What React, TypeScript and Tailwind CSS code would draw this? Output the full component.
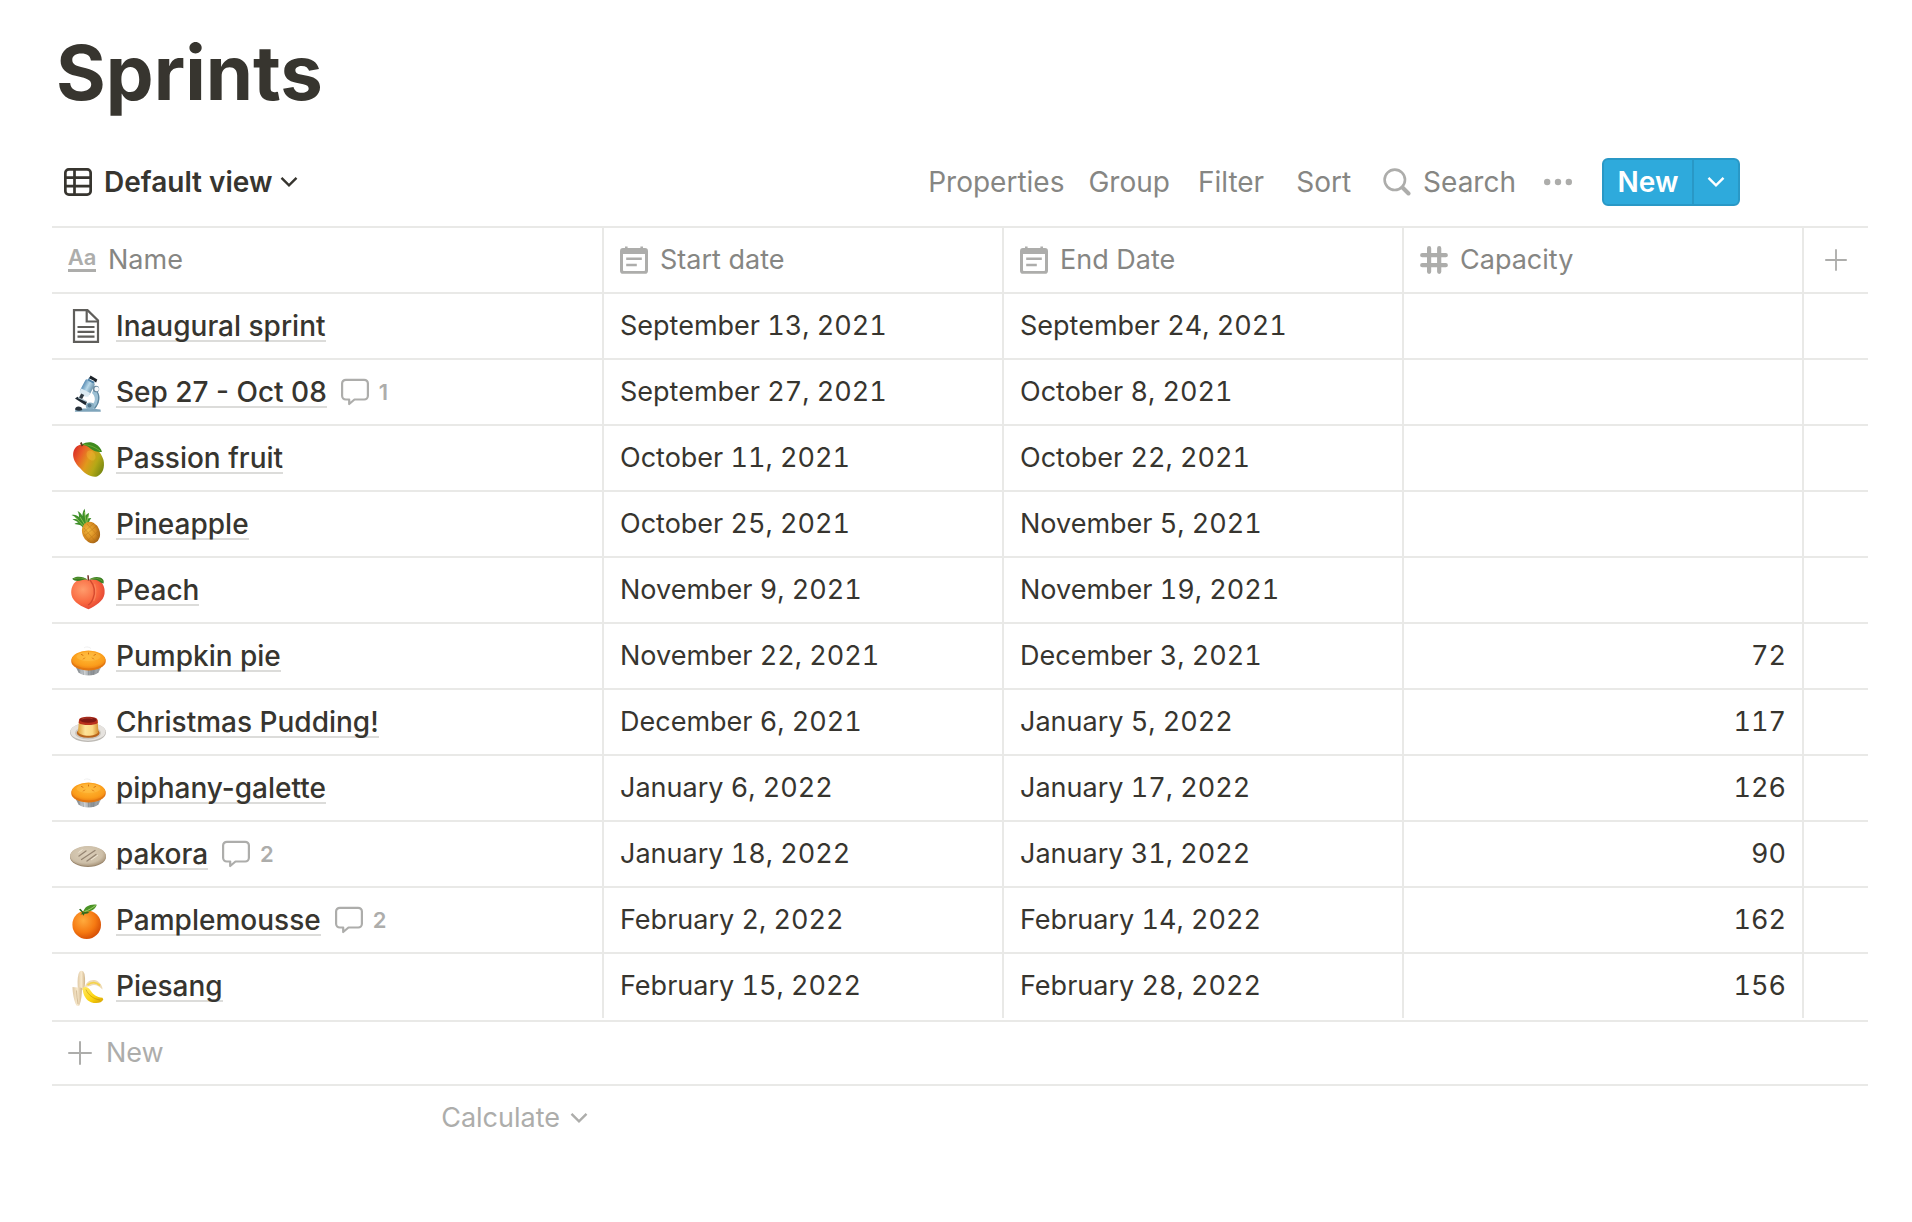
import { useId, type ReactNode } from "react";

type IconProps = { className?: string };

function ChevronDown({ className }: IconProps) {
  return (
    <svg viewBox="0 0 18 12" className={className} fill="none" stroke="currentColor" strokeWidth="2.4" aria-hidden="true">
      <path d="M1.5 1.8 9 9.4l7.500-7.600" />
    </svg>
  );
}

function TableIcon() {
  return (
    <svg viewBox="0 0 28 28" className="size-7 shrink-0" fill="none" stroke="currentColor" strokeWidth="2.700" aria-hidden="true">
      <rect x="1.350" y="1.350" width="25.300" height="25.300" rx="3.500" />
      <path d="M1.500 9.700h25M1.500 18.200h25M10.500 1.500v25" />
    </svg>
  );
}

function DateIcon() {
  return (
    <svg viewBox="0 0 28 28" className="size-7 shrink-0" fill="currentColor" aria-hidden="true">
      <path
        fillRule="evenodd"
        d="M5 .5h2.600v1.600h12.800V.5H23v1.600h1.800A3.100 3.100 0 0 1 28 5.200v19.500a3.100 3.100 0 0 1-3.200 3.100H3.200A3.100 3.100 0 0 1 0 24.700V5.200a3.100 3.100 0 0 1 3.200-3.100H5zM3 8v16.200c0 .5.3.8.8.8h20.400c.5 0 .8-.3.800-.8V8z"
      />
      <path d="M6.200 11.500h15.600V14H6.200zM6.200 17.700h10.600v2.500H6.200z" />
    </svg>
  );
}

function HashIcon() {
  return (
    <svg viewBox="0 0 28 28" className="size-7 shrink-0" fill="none" stroke="currentColor" strokeWidth="4.200" strokeLinecap="round" aria-hidden="true">
      <path d="M2.200 9.200h23.600M2.200 19.200h23.600M9.100 2.200v23.600M19.200 2.200v23.600" />
    </svg>
  );
}

function TitleIcon() {
  return (
    <span className="flex h-6 w-7 shrink-0 flex-col items-center justify-end border-b-3 border-current text-[22px] leading-6 font-semibold" aria-hidden="true">
      Aa
    </span>
  );
}

function SearchIcon() {
  return (
    <svg viewBox="0 0 28 28" className="size-7 shrink-0" fill="none" stroke="currentColor" aria-hidden="true">
      <circle cx="11.800" cy="11.800" r="10.200" strokeWidth="2.600" />
      <path d="m19.500 19.500 6 6" strokeWidth="4" strokeLinecap="round" />
    </svg>
  );
}

function PlusIcon({ className }: IconProps) {
  return (
    <svg viewBox="0 0 24 24" className={className} fill="none" stroke="currentColor" strokeWidth="2" strokeLinecap="round" aria-hidden="true">
      <path d="M12 1v22M1 12h22" />
    </svg>
  );
}

function CommentIcon() {
  return (
    <svg viewBox="0 0 28 28" className="size-7 shrink-0" fill="none" stroke="currentColor" strokeWidth="2.200" strokeLinejoin="round" aria-hidden="true">
      <path d="M4.800 1.800h18.400a3.700 3.700 0 0 1 3.700 3.700v12.300a3.700 3.700 0 0 1-3.700 3.700H13.500L8.200 26V21.500H4.800a3.700 3.700 0 0 1-3.700-3.700V5.500a3.700 3.700 0 0 1 3.700-3.700z" />
    </svg>
  );
}

function Glyph({ children }: { children: ReactNode }) {
  return (
    <svg viewBox="0 0 36 40" className="h-10 w-9 shrink-0" aria-hidden="true">
      {children}
    </svg>
  );
}

function PageGlyph() {
  return (
    <Glyph>
      <g fill="none" stroke="#5f5e5b" strokeWidth="2.200">
        <path d="M4 4.100h13.500L28 14.500v21.400H4z" />
        <path d="M16.700 4.500v11h11" />
        <path d="M7.500 21h17M7.500 25.800h17M7.500 30.600h17" />
      </g>
    </Glyph>
  );
}

function MicroscopeGlyph() {
  const id = useId();
  return (
    <Glyph>
      <defs>
        <linearGradient id={id} x1="0" x2="1">
          <stop offset="0" stopColor="#5d8fb5" />
          <stop offset="0.500" stopColor="#b9d9ea" />
          <stop offset="1" stopColor="#6e95ad" />
        </linearGradient>
      </defs>
      <path d="M5.500 37.500c5-1.500 19-1.500 25 0l.3 2.200H4.800z" fill="#7fa5bb" />
      <path d="M24 16.500c7 4 7.500 14 .5 20.500h-8l1-2.500c7-1 10-8 4.500-13.500z" fill="#9cc0d4" />
      <path d="M26.500 18.500c3.500 5 3 12.500-2 18" fill="none" stroke="#5f879f" strokeWidth="1.200" />
      <ellipse cx="20" cy="34" rx="4.200" ry="3.400" fill="#8aafc3" />
      <circle cx="19.500" cy="33.500" r="2" fill="#4d7289" />
      <path d="m5 26.500 2.500-1.800 9.500 5-1.500 3.500z" fill="#1f2932" />
      <path d="m8 25.500 8.500 4" stroke="#b4cbd7" strokeWidth="1.200" />
      <path d="M5 37.500c.5-3.500 4-3.500 6.500-2l.8 2.500c-2.500 1.200-5 1-7.300-.5z" fill="#27313a" />
      <g transform="rotate(28 18 16)">
        <rect x="12" y="8.500" width="10.500" height="14" rx="2.500" fill={`url(#${id})`} />
        <rect x="14" y="5.500" width="7" height="4" rx="1" fill="#4e82a8" />
        <path d="M12.300 19.500h10v4c-2 2-8 2-10 0z" fill="#dbeaf2" />
        <rect x="14.500" y="24" width="3.500" height="4.500" fill="#303b44" />
      </g>
      <path d="m20.500 3.500 6.800 4-1.200 3-7-4z" fill="#1d232a" />
      <path d="m19.500 7 5 2.500" stroke="#d0dde5" />
      <circle cx="26" cy="17" r="3.200" fill="#6c8ca0" />
      <circle cx="26.700" cy="17" r="2.300" fill="#f3f7fa" />
    </Glyph>
  );
}

function MangoGlyph() {
  const id = useId();
  return (
    <Glyph>
      <defs>
        <linearGradient id={id} x1="0" y1="0.200" x2="1" y2="0.700">
          <stop offset="0" stopColor="#d92f25" />
          <stop offset="0.250" stopColor="#ea5f28" />
          <stop offset="0.500" stopColor="#e0991c" />
          <stop offset="0.750" stopColor="#b5a816" />
          <stop offset="1" stopColor="#7b8a12" />
        </linearGradient>
      </defs>
      <path d="M3.200 15C4.500 8 10 5.500 16 6.500c8 .5 15 7 17.500 15.500 1.500 7-.5 14-6.500 16.500-6 1.200-12.500-3-17-8.500C5.500 26 2.500 20 3.200 15z" fill={`url(#${id})`} />
      <ellipse cx="21" cy="17.500" rx="4" ry="5.500" fill="#ffd84a" opacity="0.250" transform="rotate(-35 21 17.500)" />
      <path d="M10.800 4.500 12.500 8" stroke="#5a3a1c" strokeWidth="1.800" />
      <path d="M12 6.500c4-3 10-3 13.500-.5 3.500 2 5.500 4.500 6.500 7.800-3 .6-8-.3-11-2.800-3-2.800-5.500-3.500-9-4.500z" fill="#3f8a1e" />
      <path d="M14 6.600c5 .2 11 2.500 16 6.200" fill="none" stroke="#6fae34" strokeWidth="0.900" />
    </Glyph>
  );
}

function PineappleGlyph() {
  const id = useId();
  return (
    <Glyph>
      <defs>
        <radialGradient id={id} cx="0.400" cy="0.350" r="0.750">
          <stop offset="0" stopColor="#f3b93f" />
          <stop offset="0.550" stopColor="#d88c22" />
          <stop offset="1" stopColor="#94560f" />
        </radialGradient>
      </defs>
      <path d="M13 24c-1-3-5-3.500-8.500-4 1.200-1 3-1.500 4-1.500C6.500 17 4 16 2.500 15.500c2-.8 4-.5 5.500 0C6 13.500 3.500 11.500 1.500 11c3-1 6 .5 7.500 2C9 10.500 8.500 8.500 7.500 7c2.500 1 4 3 4.800 5C12.500 9.500 13 7 14.500 4.800c.8 2.500.8 5 .5 7.200 1.200-1.500 2.500-2.500 4-3-.2 2.500-1 4-1.500 5.500 1-.5 2.500-.7 3.800-.5-1 1.500-2 3-2.800 5z" fill="#3f8f2b" />
      <path d="m10 13 5 8M14.500 8l1.800 11M5 13l8.500 9M18.500 11l-2 8.500" stroke="#8cc451" strokeWidth="0.900" />
      <ellipse cx="21" cy="28.500" rx="8.700" ry="11" transform="rotate(-22 21 28.500)" fill={`url(#${id})`} />
      <g stroke="#a5640f" strokeWidth="0.800" opacity="0.400">
        <path d="m14 24 12 14M17 20l12 13M13.500 29.500l6.500 8M27 21.500 14.500 32M29 26.500 17.500 36.500M24 19l-10 9" />
      </g>
    </Glyph>
  );
}

function PeachGlyph() {
  const id = useId();
  return (
    <Glyph>
      <defs>
        <radialGradient id={id} cx="0.350" cy="0.350" r="0.750">
          <stop offset="0" stopColor="#ff9c6c" />
          <stop offset="0.600" stopColor="#f9673f" />
          <stop offset="1" stopColor="#de3f32" />
        </radialGradient>
      </defs>
      <path d="M18.500 10c-3-1.500-8-1.500-12 1-4 3-6 8-5 14 1.500 7.500 11 12 17 14.200C25.500 36 33.500 31 34.500 24c.8-5.500-1-10.500-5-13-3-2-8-2.500-11-1z" fill={`url(#${id})`} />
      <path d="M20 10c4 5 5.500 12 3 18.500-1.200 3.500-3 5.500-5 6.500" fill="none" stroke="#d4492f" strokeWidth="1.300" />
      <path d="M24.500 14c2 5.500 1.500 12-.8 17" fill="none" stroke="#ff9a70" strokeWidth="1.200" opacity="0.500" />
      <path d="M18.500 10.500 18 5.200" stroke="#6e2f25" strokeWidth="1.500" />
      <path d="M17.500 9.500C14 6.300 6 5.500 2.200 8.700c2 2.500 6 2.800 9.300 1.500 2-.6 4-.7 6-.7z" fill="#397e22" />
      <path d="M19 9.500C23 6.500 30 6 33 9.500c1 1.500.8 3 .5 4-3-.5-4-2.500-7-3.500-2.500-.7-5-.7-7.500-.5z" fill="#397e22" />
      <path d="M4 8.600c4-1 9-.5 12.500.8M21 9c4-1.500 8-.8 11.500 2.200" fill="none" stroke="#6ea53a" strokeWidth="0.800" />
    </Glyph>
  );
}

function PieGlyph() {
  const id = useId();
  return (
    <Glyph>
      <defs>
        <linearGradient id={`${id}t`} x2="1">
          <stop offset="0" stopColor="#71777c" />
          <stop offset="0.350" stopColor="#cfd3d6" />
          <stop offset="0.600" stopColor="#8b9094" />
          <stop offset="1" stopColor="#b4b8bb" />
        </linearGradient>
        <radialGradient id={`${id}c`} cx="0.500" cy="0.400" r="0.600">
          <stop offset="0" stopColor="#ffb935" />
          <stop offset="0.750" stopColor="#fb9e1c" />
          <stop offset="1" stopColor="#ef8514" />
        </radialGradient>
      </defs>
      <path d="M14 12c1-1.500 5-1.500 7 .5" fill="none" stroke="#dcdcdc" strokeWidth="1" opacity="0.400" />
      <path d="M4.500 28.500h28l-4 8c-4 4-16 4-20 0z" fill={`url(#${id}t)`} />
      <path d="M8.500 32.500l1 4.500M13 34l.5 5M18.500 34v5M24 34l-.5 5M28.500 32.500l-1 4.500" stroke="#62686c" strokeWidth="0.600" opacity="0.500" />
      <ellipse cx="18.500" cy="25" rx="17.300" ry="9.500" fill="#e27710" />
      <ellipse cx="18.500" cy="23.500" rx="16.800" ry="9" fill={`url(#${id}c)`} />
      <ellipse cx="18.500" cy="20.500" rx="12" ry="4.500" fill="#ffc14a" opacity="0.500" />
      <path d="m11.500 18.500 1.500.8M18.500 17v1M25.500 18.500l-1.500.8M13.500 23l1-1M23.500 23l-1-1" stroke="#cf6b0b" strokeWidth="0.900" strokeLinecap="round" />
    </Glyph>
  );
}

function PuddingGlyph() {
  const id = useId();
  return (
    <Glyph>
      <defs>
        <linearGradient id={id} x2="1">
          <stop offset="0" stopColor="#dfa13a" />
          <stop offset="0.350" stopColor="#fde39a" />
          <stop offset="0.700" stopColor="#fbd884" />
          <stop offset="1" stopColor="#d68f30" />
        </linearGradient>
      </defs>
      <ellipse cx="18" cy="30.500" rx="18" ry="9.400" fill="#bdbab5" />
      <ellipse cx="18" cy="29.800" rx="17.500" ry="8.900" fill="#e6e3df" />
      <ellipse cx="18" cy="31" rx="13" ry="6.500" fill="#cbc7c1" />
      <ellipse cx="18.200" cy="31" rx="11.500" ry="4.800" fill="#b8641b" />
      <path d="M9 18h18.500l1 12c-3 5-17.500 5-20.500 0z" fill={`url(#${id})`} />
      <path d="M9 18c0-4.200 18.500-4.200 18.500 0l.3 3c-3.500 2.800-15.600 2.800-19.100 0z" fill="#b9301c" />
      <ellipse cx="18.200" cy="18" rx="8.300" ry="2.700" fill="#801813" />
      <path d="M11.500 17.200c3-1.500 8-1.700 11-.5" fill="none" stroke="#b8402c" strokeWidth="0.800" />
    </Glyph>
  );
}

function FlatbreadGlyph() {
  const id = useId();
  return (
    <Glyph>
      <defs>
        <radialGradient id={id} cx="0.450" cy="0.400" r="0.600">
          <stop offset="0" stopColor="#ddd0bb" />
          <stop offset="0.750" stopColor="#cdbfa8" />
          <stop offset="1" stopColor="#ad9a80" />
        </radialGradient>
      </defs>
      <ellipse cx="18" cy="22.700" rx="18" ry="10.300" fill="#9a876e" />
      <ellipse cx="18" cy="22" rx="17.900" ry="10" fill={`url(#${id})`} />
      <g stroke="#857462" strokeWidth="1.300" strokeLinecap="round" opacity="0.800">
        <path d="m9 22 7-5M11.500 25.500 25 16.500M17 27l9-6.500" />
      </g>
      <path d="m8.500 18.500 4-3M21 26l7-5" stroke="#eee4d3" strokeWidth="1" />
    </Glyph>
  );
}

function OrangeGlyph() {
  const id = useId();
  return (
    <Glyph>
      <defs>
        <radialGradient id={id} cx="0.380" cy="0.350" r="0.700">
          <stop offset="0" stopColor="#ffab3d" />
          <stop offset="0.600" stopColor="#f67a12" />
          <stop offset="1" stopColor="#d44c05" />
        </radialGradient>
      </defs>
      <circle cx="16.700" cy="24.700" r="14.300" fill={`url(#${id})`} />
      <path d="M10 14.500c1.200-.4 2-.8 2-2L9 9.500l1.500-.8 3 3.500c2-1 4-.5 6 .5-2 .8-3.500 1.200-5 1l-.8 2-1.200-1.500z" fill="#316b1d" />
      <path d="M13.500 12C14 7 20 3.800 26.800 4.800c-1.500 4.500-6.300 7.700-13.300 7.200z" fill="#4a9326" />
      <path d="M14.500 11.500c4-1 7.500-3.500 11-6" fill="none" stroke="#a2cf6b" strokeWidth="1" />
    </Glyph>
  );
}

function BananaGlyph() {
  const id = useId();
  return (
    <Glyph>
      <defs>
        <linearGradient id={`${id}f`} x2="1">
          <stop offset="0" stopColor="#dfc9a6" />
          <stop offset="0.500" stopColor="#f8e9cc" />
          <stop offset="1" stopColor="#cfb389" />
        </linearGradient>
        <linearGradient id={`${id}y`} y2="1">
          <stop offset="0" stopColor="#ffe766" />
          <stop offset="0.600" stopColor="#fcd40c" />
          <stop offset="1" stopColor="#d29e06" />
        </linearGradient>
      </defs>
      <path d="M8 24c-.5-6-.8-11 .5-16C9.500 3.500 13.500 3.500 14.500 8c1 5 .8 11-.5 16z" fill={`url(#${id}f)`} />
      <path d="M15 21c1-6 8-9 13-5.500 3 2 4.500 5 4.500 8-3.500-3.500-8-6-12-3.500z" fill="#eedbb6" />
      <path d="M17.500 19c4-3.500 9-3 12.500.5" fill="none" stroke="#f5d44b" strokeWidth="1.800" />
      <path d="M12.500 22c3-2 6-1 8 2.500 3 4.500 6 6.500 12 7.300l.8 1.700c-1.500 3.500-7 4.500-12.300 2.700-5-2-8-7-8.500-14.200z" fill={`url(#${id}y)`} />
      <path d="M16 23.500c2 5 7 9.500 14 10.500" fill="none" stroke="#b88b0a" strokeWidth="0.900" opacity="0.600" />
      <path d="M2.500 21c3.500.5 7 .3 9.500 1-.2 6-.5 12-2.500 17.200-1 .8-2 .8-3 .3C4 35 2.500 27 2.500 21z" fill={`url(#${id}f)`} />
      <path d="M6.500 24.500c.2 5 .8 9.500 1.500 13.500" fill="none" stroke="#cbb38c" strokeWidth="0.800" />
    </Glyph>
  );
}

type Sprint = {
  icon: ReactNode;
  name: string;
  comments?: number;
  start: string;
  end: string;
  capacity?: number;
};

const sprints: Sprint[] = [
  { icon: <PageGlyph />, name: "Inaugural sprint", start: "September 13, 2021", end: "September 24, 2021" },
  { icon: <MicroscopeGlyph />, name: "Sep 27 - Oct 08", comments: 1, start: "September 27, 2021", end: "October 8, 2021" },
  { icon: <MangoGlyph />, name: "Passion fruit", start: "October 11, 2021", end: "October 22, 2021" },
  { icon: <PineappleGlyph />, name: "Pineapple", start: "October 25, 2021", end: "November 5, 2021" },
  { icon: <PeachGlyph />, name: "Peach", start: "November 9, 2021", end: "November 19, 2021" },
  { icon: <PieGlyph />, name: "Pumpkin pie", start: "November 22, 2021", end: "December 3, 2021", capacity: 72 },
  { icon: <PuddingGlyph />, name: "Christmas Pudding!", start: "December 6, 2021", end: "January 5, 2022", capacity: 117 },
  { icon: <PieGlyph />, name: "piphany-galette", start: "January 6, 2022", end: "January 17, 2022", capacity: 126 },
  { icon: <FlatbreadGlyph />, name: "pakora", comments: 2, start: "January 18, 2022", end: "January 31, 2022", capacity: 90 },
  { icon: <OrangeGlyph />, name: "Pamplemousse", comments: 2, start: "February 2, 2022", end: "February 14, 2022", capacity: 162 },
  { icon: <BananaGlyph />, name: "Piesang", start: "February 15, 2022", end: "February 28, 2022", capacity: 156 },
];

function Toolbar() {
  return (
    <div className="flex items-center justify-between pr-32">
      <button className="flex items-center gap-3 pl-3 font-semibold">
        <TableIcon />
        <span>Default view</span>
        <ChevronDown className="-ml-1 h-3 w-[18px]" />
      </button>
      <div className="flex items-center text-[#868683]">
        <button className="px-3">Properties</button>
        <button className="px-3">Group</button>
        <button className="px-4">Filter</button>
        <button className="px-4">Sort</button>
        <button className="flex items-center gap-3 pr-3 pl-4">
          <span className="text-[#adadab]">
            <SearchIcon />
          </span>
          Search
        </button>
        <button className="px-4 text-[#adadab]" aria-label="More options">
          <svg viewBox="0 0 28 8" className="h-2 w-7" fill="currentColor" aria-hidden="true">
            <circle cx="3.200" cy="4" r="3.200" />
            <circle cx="14" cy="4" r="3.200" />
            <circle cx="24.800" cy="4" r="3.200" />
          </svg>
        </button>
        <div className="ml-3.5 flex h-12 overflow-hidden rounded-md border-2 border-[#2998c6] bg-[#2eaadc] font-semibold text-white">
          <button className="w-[90px] border-r-2 border-[#2998c6]">New</button>
          <button className="flex w-11 items-center justify-center" aria-label="New options">
            <ChevronDown className="h-3 w-[18px]" />
          </button>
        </div>
      </div>
    </div>
  );
}

function HeaderCell({ icon, label }: { icon: ReactNode; label: string }) {
  return (
    <th scope="col" className="h-[66px] border-r-2 border-b-2 border-[#e9e9e7] px-4 text-left font-normal">
      <div className="flex items-center gap-3 text-[27px] text-[#868683]">
        <span className="text-[#adadab]">{icon}</span>
        {label}
      </div>
    </th>
  );
}

function SprintRow({ sprint, last }: { sprint: Sprint; last: boolean }) {
  const cell = last ? "h-16 border-r-2 border-[#e9e9e7]" : "h-[66px] border-r-2 border-b-2 border-[#e9e9e7]";
  return (
    <tr>
      <td className={`${cell} pl-[18px]`}>
        <div className="flex items-center">
          {sprint.icon}
          <a href="#" className="ml-2.5 border-b-2 border-[#dcdcda] pt-0.5 leading-7 font-medium">
            {sprint.name}
          </a>
          {sprint.comments !== undefined && (
            <span className="ml-3.5 flex items-center gap-2.5 text-[22px] font-semibold text-[#adadab]">
              <CommentIcon />
              {sprint.comments}
            </span>
          )}
        </div>
      </td>
      <td className={`${cell} px-4 text-[27px] tabular-nums`}>{sprint.start}</td>
      <td className={`${cell} px-4 text-[27px] tabular-nums`}>{sprint.end}</td>
      <td className={`${cell} px-4 text-right text-[27px] tabular-nums`}>{sprint.capacity}</td>
      <td className={last ? "" : "border-b-2 border-[#e9e9e7]"} />
    </tr>
  );
}

export default function App() {
  return (
    <main className="min-h-screen bg-white pt-6 pr-11 pl-[52px] font-['Inter',sans-serif] text-[28px] leading-9 text-[#37352f]">
      <h1 className="mb-[38px] pl-1 text-[76px] leading-24 font-bold">Sprints</h1>
      <Toolbar />
      <table className="mt-5 w-full table-fixed border-separate border-spacing-0 border-t-2 border-[#e9e9e7]">
        <colgroup>
          <col className="w-[552px]" />
          <col className="w-[400px]" />
          <col className="w-[400px]" />
          <col className="w-[400px]" />
          <col />
        </colgroup>
        <thead>
          <tr>
            <HeaderCell icon={<TitleIcon />} label="Name" />
            <HeaderCell icon={<DateIcon />} label="Start date" />
            <HeaderCell icon={<DateIcon />} label="End Date" />
            <HeaderCell icon={<HashIcon />} label="Capacity" />
            <th scope="col" className="border-b-2 border-[#e9e9e7]">
              <button className="mx-auto flex text-[#adadab]" aria-label="Add property">
                <PlusIcon className="size-[22px]" />
              </button>
            </th>
          </tr>
        </thead>
        <tbody>
          {sprints.map((sprint, index) => (
            <SprintRow key={sprint.name} sprint={sprint} last={index === sprints.length - 1} />
          ))}
        </tbody>
      </table>
      <button className="mt-0.5 flex h-[66px] w-full items-center gap-3.5 border-y-2 border-[#e9e9e7] pl-4 text-[27px] text-[#adadab]">
        <PlusIcon className="size-6" />
        New
      </button>
      <div className="flex h-16 w-[552px] items-center justify-end pr-4 text-[27px] text-[#adadab]">
        <button className="flex items-center gap-2.5">
          Calculate
          <ChevronDown className="h-3 w-[18px]" />
        </button>
      </div>
    </main>
  );
}
